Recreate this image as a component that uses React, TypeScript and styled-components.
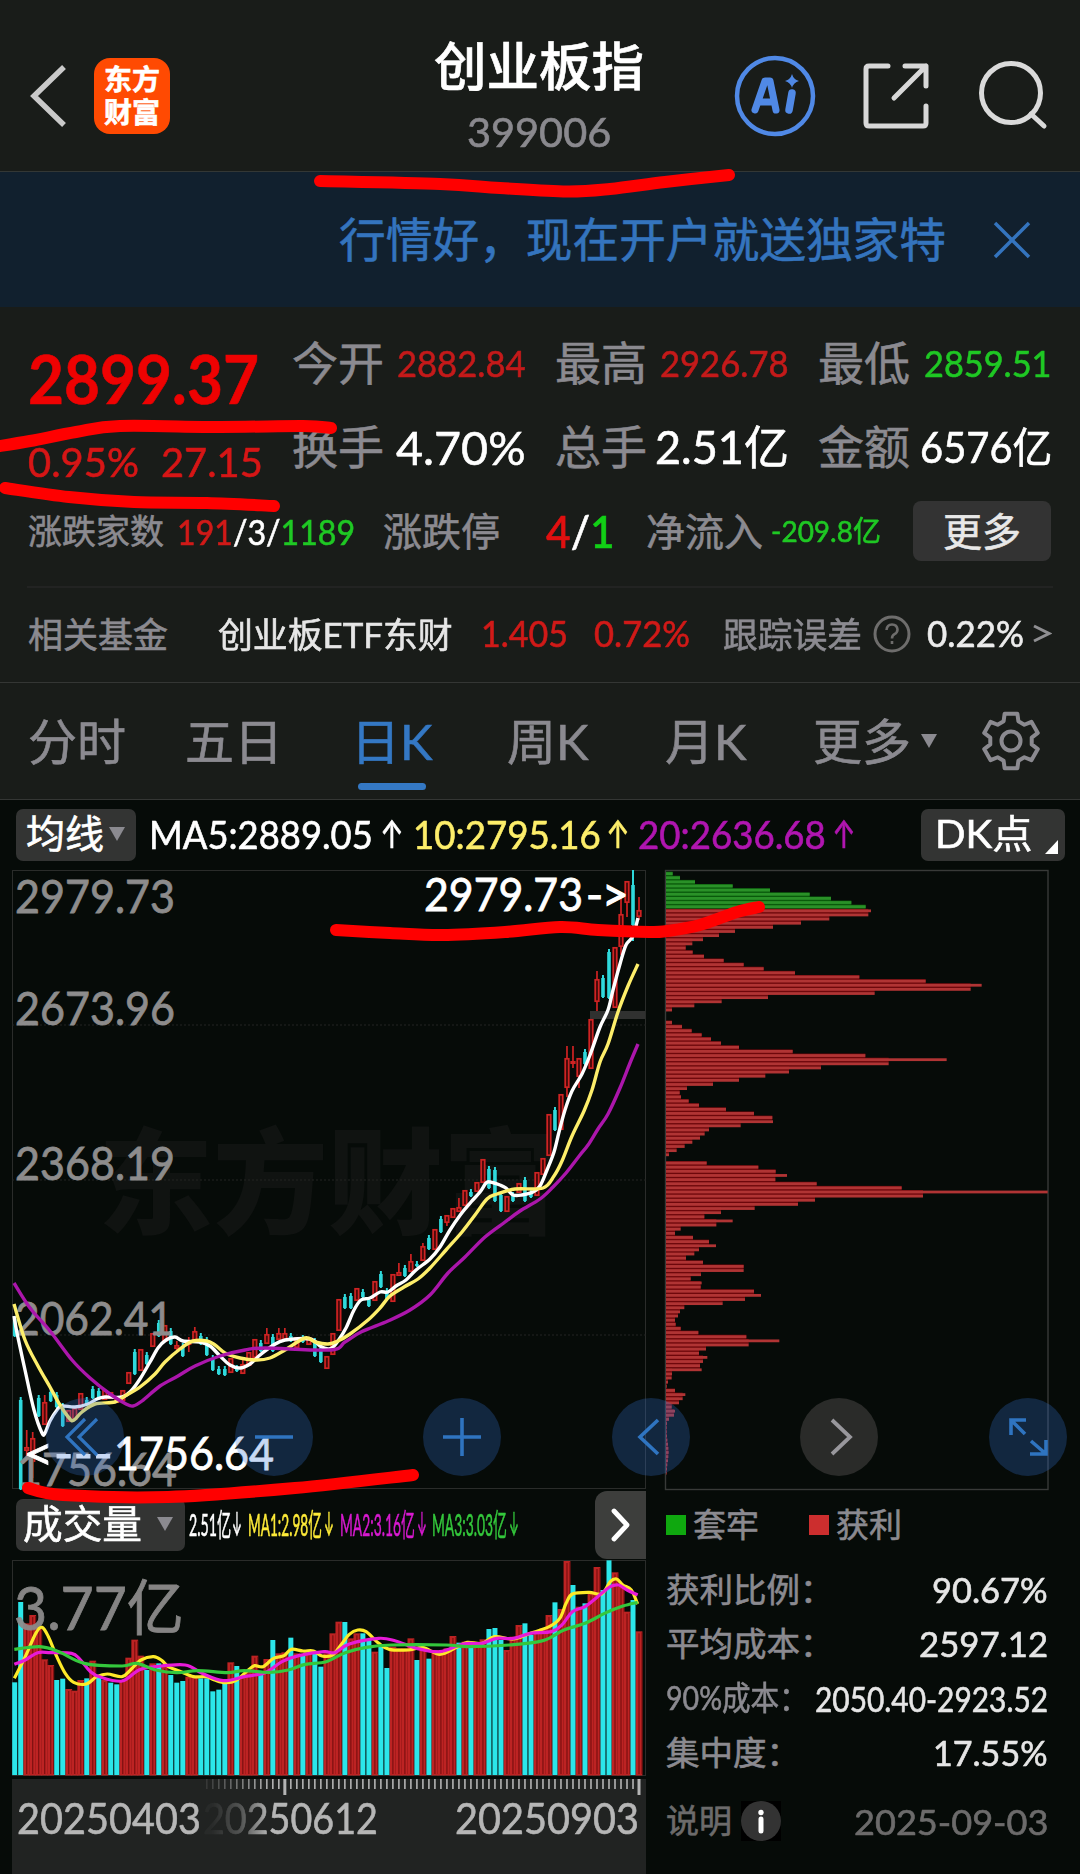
import React, { useLayoutEffect, useRef, useState } from "react";
import styled, { createGlobalStyle } from "styled-components";

const RED = "#d01a18";
const GREEN = "#1fc824";
const GREY = "#8b8a90";
const CANVAS = "#060b08";
const PANEL = "#191c19";
const FONT = `Lato, "Noto Sans CJK SC", sans-serif`;

const Global = createGlobalStyle`
  body { margin: 0; background: ${PANEL}; }
  * { box-sizing: border-box; }
`;

const Page = styled.div`
  position: relative;
  width: 1080px;
  height: 1874px;
  overflow: hidden;
  background: ${PANEL};
  color: #fff;
  font-family: ${FONT};
  line-height: 1.2;
  -webkit-text-stroke: 0.6px currentColor;
`;

/* ---------- text that squeezes itself into a given width ---------- */

const FitBox = styled.span<{ $w: number; $size: number; $color: string; $weight: number; $ml: number; $font?: string }>`
  display: inline-block;
  flex: none;
  width: ${(p) => p.$w}px;
  margin-left: ${(p) => p.$ml}px;
  font-size: ${(p) => p.$size}px;
  font-weight: ${(p) => p.$weight};
  font-family: ${(p) => p.$font ?? FONT};
  color: ${(p) => p.$color};
  white-space: nowrap;
`;

const FitInner = styled.span`
  display: inline-block;
  transform-origin: left center;
  -webkit-text-stroke: 0.6px currentColor;
`;

type FitProps = {
  w: number;
  size: number;
  color?: string;
  weight?: number;
  ml?: number;
  font?: string;
  children: React.ReactNode;
};

function Fit({ w, size, color = "#fff", weight = 400, ml = 0, font, children }: FitProps) {
  const ref = useRef<HTMLSpanElement>(null);
  const [scale, setScale] = useState(1);
  useLayoutEffect(() => {
    if (ref.current) setScale(w / ref.current.offsetWidth);
  }, [w]);
  return (
    <FitBox $w={w} $size={size} $color={color} $weight={weight} $ml={ml} $font={font}>
      <FitInner ref={ref} style={{ transform: `scaleX(${scale})` }}>
        {children}
      </FitInner>
    </FitBox>
  );
}

const Label = styled.span<{ $size: number; $color?: string; $ml?: number; $weight?: number; $w?: number }>`
  flex: none;
  font-size: ${(p) => p.$size}px;
  color: ${(p) => p.$color ?? GREY};
  font-weight: ${(p) => p.$weight ?? 400};
  margin-left: ${(p) => p.$ml ?? 0}px;
  width: ${(p) => (p.$w ? `${p.$w}px` : "auto")};
  white-space: nowrap;
  -webkit-text-stroke: 0.6px currentColor;
`;

const Tint = styled.span<{ $c: string }>`
  color: ${(p) => p.$c};
  -webkit-text-stroke: 0.6px currentColor;
`;

/* ---------- header ---------- */

const Header = styled.header`
  display: grid;
  grid-template-columns: 94px 76px 563px 79px 156px 1fr;
  align-items: center;
  height: 172px;
  padding-top: 20px;
  border-bottom: 1px solid #333735;
`;

const Logo = styled.div`
  display: flex;
  flex-direction: column;
  align-items: center;
  justify-content: center;
  height: 76px;
  border-radius: 16px;
  background: #ff4a02;
  font-size: 28px;
  font-weight: 700;
  line-height: 33px;
`;

const TitleBox = styled.div`
  display: flex;
  flex-direction: column;
  align-items: center;
  width: 220px;
  margin: 5px 0 0 259px;
`;

const Title = styled.div`
  font-size: 52.5px;
  font-weight: 500;
  line-height: 68px;
`;

const Code = styled.div`
  display: flex;
  line-height: 64px;
`;

const Banner = styled.div`
  display: flex;
  align-items: center;
  height: 135px;
  padding: 0 48px 0 339px;
  background: #11202e;
  color: #3474be;
  font-size: 46.7px;
  justify-content: space-between;
  -webkit-text-stroke: 0.6px #3474be;
`;

/* ---------- quote ---------- */

const Quote = styled.section`
  height: 376px;
  border-bottom: 1px solid #343634;
`;

const QuoteTop = styled.div`
  display: grid;
  grid-template-columns: 264px 1fr;
  height: 182px;
  padding-left: 28px;
`;

const PriceCol = styled.div`
  display: flex;
  flex-direction: column;
  padding-top: 28px;
`;

const PriceLine = styled.div<{ $h: number }>`
  display: flex;
  align-items: center;
  height: ${(p) => p.$h}px;
`;

const StatGrid = styled.div`
  display: grid;
  grid-template-columns: repeat(3, 234px);
  grid-template-rows: 84px 84px;
  column-gap: 29px;
  padding-top: 14px;
`;

const Stat = styled.div`
  display: flex;
  align-items: center;
  justify-content: space-between;
`;

const Row = styled.div<{ $h: number; $pl?: number }>`
  display: flex;
  align-items: center;
  height: ${(p) => p.$h}px;
  padding-left: ${(p) => p.$pl ?? 28}px;
`;

const MoreButton = styled.button`
  display: flex;
  align-items: center;
  justify-content: center;
  width: 138px;
  height: 60px;
  margin-left: 32px;
  padding: 0 0 5px;
  border: 0;
  border-radius: 8px;
  background: #333333;
  color: #e8e8e8;
  font: 400 39px ${FONT};
  -webkit-text-stroke: 0.6px #e8e8e8;
`;

const Divider = styled.div`
  height: 2px;
  margin: 13px 27px 0;
  background: #222322;
`;

/* ---------- tabs ---------- */

const Tabs = styled.nav`
  display: grid;
  grid-template-columns: 157px 166px 156px 158px 148px 108px 60px 1fr;
  align-items: center;
  height: 117px;
  padding-left: 28px;
  border-bottom: 1px solid #343634;
`;

const Tab = styled.div<{ $on?: boolean }>`
  position: relative;
  font-size: 49px;
  color: ${(p) => (p.$on ? "#3478c4" : GREY)};
  white-space: nowrap;
  -webkit-text-stroke: 0.6px currentColor;
  &::after {
    content: "";
    display: ${(p) => (p.$on ? "block" : "none")};
    position: absolute;
    left: 7px;
    bottom: -20px;
    width: 68px;
    height: 7px;
    border-radius: 4px;
    background: #3478c4;
  }
`;

const Caret = styled.i<{ $ml?: number; $h?: number }>`
  flex: none;
  width: 0;
  height: 0;
  margin-left: ${(p) => p.$ml ?? 0}px;
  border-left: 8px solid transparent;
  border-right: 8px solid transparent;
  border-top: ${(p) => p.$h ?? 14}px solid #8b8a90;
`;

/* ---------- charts ---------- */

const Board = styled.main`
  height: 1074px;
  background: ${CANVAS};
`;

const Chip = styled.div<{ $w: number; $h?: number; $pl?: number }>`
  position: relative;
  display: flex;
  flex: none;
  align-items: center;
  width: ${(p) => p.$w}px;
  height: ${(p) => p.$h ?? 52}px;
  padding-left: ${(p) => p.$pl ?? 10}px;
  padding-bottom: 3px;
  border-radius: 7px;
  background: #333433;
`;

const Corner = styled.i`
  position: absolute;
  right: 7px;
  bottom: 7px;
  border-left: 13px solid transparent;
  border-bottom: 14px solid #fff;
`;

const Charts = styled.div`
  position: relative;
  display: grid;
  grid-template-columns: 635px 384px;
  column-gap: 18px;
  height: 620px;
  padding-left: 12px;
`;

const Plot = styled.svg`
  display: block;
  overflow: visible;
  font-family: ${FONT};
  -webkit-text-stroke: 0;
`;

const Controls = styled.div`
  position: absolute;
  left: 46px;
  top: 528px;
  display: flex;
  gap: 110.6px;
`;

const Round = styled.button<{ $grey?: boolean }>`
  width: 78px;
  height: 78px;
  padding: 0;
  border: 0;
  border-radius: 50%;
  background: ${(p) => (p.$grey ? "#2a2b29" : "rgba(52, 116, 216, 0.27)")};
  svg { display: block; }
`;

const Lower = styled.div`
  display: grid;
  grid-template-columns: 634px 1fr;
  padding-left: 12px;
  height: 384px;
`;

const VolumeBar = styled.div`
  display: flex;
  align-items: center;
  height: 70px;
  padding-left: 4px;
`;

const Next = styled.button`
  display: flex;
  align-items: center;
  justify-content: center;
  width: 51px;
  height: 68px;
  margin-left: auto;
  padding: 0;
  border: 0;
  border-radius: 12px 0 0 12px;
  background: #3d3e3c;
`;

const Axis = styled.div`
  position: relative;
  display: flex;
  height: 95px;
  margin-top: 3px;
  padding: 14px 7px 0 5px;
  background: #212322;
`;

const Ticks = styled.svg`
  position: absolute;
  left: 0;
  top: 0;
`;

const Faded = styled.div`
  margin-left: 2px;
  mask-image: linear-gradient(90deg, rgba(0, 0, 0, 0.05) 5%, rgba(0, 0, 0, 0.35) 22%, #000 38%);
`;

const Side = styled.aside`
  padding: 8px 32px 0 20px;
`;

const SideRow = styled.div<{ $h: number }>`
  display: flex;
  align-items: center;
  height: ${(p) => p.$h}px;
`;

const Spacer = styled.span`
  flex: 1;
`;

const Swatch = styled.i<{ $c: string; $ml?: number }>`
  width: 20px;
  height: 20px;
  margin-left: ${(p) => p.$ml ?? 0}px;
  background: ${(p) => p.$c};
`;

const Marker = styled.svg`
  position: absolute;
  left: 0;
  top: 0;
  pointer-events: none;
`;

/* ---------- data ---------- */

const STEP = 6.003;
const X0 = 14.7;
const xAt = (i: number) => X0 + i * STEP;

/* kind, high, body top, body bottom, low */
type Candle = [string, number, number, number, number];
const candles: Candle[] = (
  "c1316-1337 c1397-1490 r1430-1447-1451-1458 r1432-1438-1462-1478 c1395-1417 r1395-1402-1425-1425 c1389-1402 c1392-1408 c1403-1427 r1410-1422 " +
  "r1408-1420 r1393-1410 c1397-1406 c1386-1399 c1388-1400 r1390-1400 r1392-1399 r1396-1403 r1390-1401 r1372-1384 " +
  "c1349-1375 r1349-1371 c1352-1365 r1333-1347 c1320-1337 r1325-1342 c1328-1345 r1341-1345-1349-1350 c1343-1357 r1337-1341-1345-1352 " +
  "r1327-1331-1341-1341 c1333-1345 c1337-1356 c1355-1371 c1366-1375 c1366-1376 r1358-1373 c1365-1372 r1360-1364-1374-1374 r1352-1366 " +
  "r1339-1358 c1340-1352 r1328-1334-1344-1344 c1334-1352 r1328-1333-1340-1340 r1328-1333-1340-1340 c1333-1342 r1337-1348 c1335-1343 r1337-1345 " +
  "c1338-1357 c1345-1363 r1356-1369 r1333-1355 r1299-1331 c1294-1309 c1293-1309 r1288-1301 c1289-1298 c1297-1307 " +
  "r1281-1301 c1271-1288 c1288-1300 r1274-1302 r1263-1272-1276-1276 c1265-1277 r1254-1261-1272-1272 c1261-1267 r1243-1246-1261-1261 c1235-1250 " +
  "r1229-1250 c1216-1233 r1215-1215-1223-1226 r1208-1218 r1198-1207-1212-1212 r1190-1206 c1189-1197 r1182-1192 r1159-1183 c1166-1189 " +
  "c1167-1202 c1192-1212 r1196-1212 c1192-1202 r1183-1193 c1177-1202 c1190-1198 r1172-1196 r1158-1175 r1114-1156 " +
  "c1107-1131 r1094-1130 r1046-1058-1088-1097 r1046-1061-1064-1068 r1058-1058-1077-1088 c1049-1065 r1019-1069 r971-979-1002-1011 c975-998 c949-999 " +
  "r947-1008 r897-914-947-955 r881-881-903-917 c870-885-925-941 r897-910-917-920"
)
  .split(" ")
  .map((s) => {
    const n = s.slice(1).split("-").map(Number);
    return n.length === 2 ? [s[0], n[0], n[0], n[1], n[1]] : [s[0], n[0], n[1], n[2], n[3]];
  }) as Candle[];

const ma5 =
  "14,1316 17,1333 25,1370 34,1410 42,1433 45,1433 50,1421 57,1410 62,1406 75,1407 88,1404 97,1399 105,1397 122,1397 131,1391 140,1379 150,1362 158,1348 166,1340 175,1337 183,1341 200,1342 210,1346 220,1356 230,1365 240,1368 250,1364 260,1355 272,1346 285,1340 310,1339 320,1346 328,1349 333,1347 338,1341 346,1328 354,1310 361,1300 370,1298 380,1292 388,1292 396,1286 406,1280 416,1270 430,1259 440,1247 450,1230 461,1214 471,1202 480,1192 486,1183 490,1182 500,1185 506,1188 513,1195 522,1195 533,1192 540,1186 547,1170 554,1152 559,1132 565,1110 572,1091 582,1074 590,1055 600,1027 608,1010 613,990 620,964 626,945 633,936 638,918";
const ma10 =
  "14,1304 25,1340 38,1366 50,1387 60,1405 70,1419 74,1420 82,1412 95,1404 115,1402 125,1396 140,1387 155,1374 165,1362 180,1349 193,1341 207,1341 215,1345 225,1353 240,1358 257,1360 270,1358 285,1350 305,1338 315,1342 328,1344 338,1341 350,1334 368,1320 380,1308 390,1296 404,1287 418,1279 430,1268 446,1250 462,1232 475,1215 487,1199 497,1194 515,1189 543,1188 554,1176 562,1161 572,1136 584,1111 592,1090 600,1062 608,1044 618,1012 628,986 638,964";
const ma20 =
  "14,1283 30,1308 50,1331 72,1360 90,1378 110,1394 126,1404 133,1406 142,1401 160,1386 178,1376 195,1366 220,1356 245,1350 265,1348 330,1350 345,1342 361,1332 388,1321 410,1310 430,1295 448,1273 465,1257 485,1237 505,1222 520,1211 540,1199 553,1187 566,1173 580,1155 588,1145 598,1129 608,1114 620,1088 630,1063 638,1044";

/* width of each price level, in thirds of a pixel; 0 leaves the level empty */
const chips = [
  20, 42, 87, 200, 312, 431, 495, 556, 599, 615, 607, 490, 405, 321, 207, 159, 111, 79, 59, 80, 114, 173, 233, 293, 387, 580, 779,
  947, 914, 626, 306, 167, 85, 18, 0, 0, 18, 48, 77, 107, 135, 165, 219, 380, 598, 842, 668, 465, 369, 298, 219, 141, 63, 41, 45, 68,
  99, 180, 264, 319, 321, 224, 129, 116, 102, 79, 56, 32, 9, 0, 122, 277, 329, 363, 328, 452, 707, 1145, 771, 447, 396, 266, 165,
  115, 200, 151, 44, 27, 81, 129, 150, 99, 85, 60, 111, 233, 233, 105, 74, 107, 104, 264, 285, 237, 170, 55, 42, 36, 27, 29, 44, 97,
  241, 340, 248, 120, 99, 124, 111, 102, 107, 18, 17, 6, 2, 27, 58, 50, 39, 17, 27, 24, 9, 3, 2, 2, 3, 4, 6, 7, 8, 7, 6, 4, 3, 2,
];

/* distance of each volume bar's top below the top of the block, in thirds of a pixel */
const volumes = (
  "c577 c336 r400 r375 r410 r508 r525 c570 c566 r597 r602 r570 c565 r512 c560 r570 c578 c583 r570 r503 r449 r497 c540 r520 c520 r530 c555 c578 c573 r560 r560 c565 c565 c604 c599 c580 r517 c528 r560 r545 r497 c550 r507 c450 r490 r487 c443 r490 c495 r490 c485 c530 r490 r430 r395 c396 r445 r430 c430 c450 r485 c470 c534 r470 r475 r475 r445 c510 r475 c506 r480 r490 r475 r438 c458 r455 c460 r465 r448 c417 c414 c450 r480 r440 r405 c400 c435 r425 r415 r375 c337 r357 r213 c285 r350 c340 r310 r231 c300 c211 r247 r290 r365 c330 r424"
)
  .split(" ")
  .map((s) => ({ up: s[0] === "r", y: 1490 + Number(s.slice(1)) / 3 }));

type Pt = [number, number];
const vma1: Pt[] = [[34, 565], [60, 500], [85, 430], [100, 412], [115, 440], [135, 500], [155, 550], [175, 577], [205, 582], [230, 560], [255, 552], [290, 560], [310, 540], [335, 510], [365, 500], [385, 512], [400, 530], [430, 545], [460, 560], [490, 560], [510, 570], [535, 578], [560, 572], [590, 540], [605, 527], [625, 530], [650, 505], [675, 497], [692, 478], [720, 483], [745, 483], [765, 498], [790, 495], [810, 465], [830, 433], [850, 420], [870, 425], [900, 460], [925, 478], [970, 480], [1005, 473], [1045, 493], [1085, 472], [1110, 457], [1145, 460], [1175, 440], [1220, 447], [1260, 430], [1305, 410], [1330, 385], [1345, 340], [1360, 312], [1400, 307], [1430, 312], [1450, 275], [1465, 267], [1480, 285], [1500, 300], [1515, 342]];
const vma2: Pt[] = [[34, 523], [60, 510], [90, 488], [120, 488], [170, 490], [190, 508], [215, 545], [240, 562], [290, 573], [330, 540], [370, 530], [440, 525], [480, 550], [530, 572], [580, 560], [630, 548], [670, 515], [710, 497], [770, 485], [795, 488], [830, 462], [900, 445], [940, 453], [990, 475], [1045, 485], [1100, 462], [1145, 460], [1180, 445], [1220, 445], [1260, 430], [1310, 425], [1335, 405], [1360, 365], [1390, 350], [1420, 320], [1450, 290], [1470, 285], [1490, 300], [1515, 315]];
const vma3: Pt[] = [[34, 478], [95, 470], [140, 485], [200, 520], [290, 528], [325, 520], [370, 540], [420, 548], [470, 542], [540, 548], [580, 542], [640, 547], [685, 540], [725, 523], [775, 515], [820, 488], [870, 472], [930, 465], [1060, 465], [1110, 470], [1210, 465], [1290, 452], [1340, 420], [1390, 400], [1440, 368], [1480, 348], [1515, 337]];

/* Catmull-Rom smoothing of a point list */
function smooth(p: Pt[]) {
  let d = `M${p[0][0]} ${p[0][1]}`;
  for (let i = 0; i < p.length - 1; i++) {
    const a = p[i - 1] ?? p[i];
    const b = p[i];
    const c = p[i + 1];
    const e = p[i + 2] ?? c;
    d += `C${b[0] + (c[0] - a[0]) / 6} ${b[1] + (c[1] - a[1]) / 6} ${c[0] - (e[0] - b[0]) / 6} ${c[1] - (e[1] - b[1]) / 6} ${c[0]} ${c[1]}`;
  }
  return d;
}
const parse = (s: string) => s.split(" ").map((q) => q.split(",").map(Number) as Pt);
const volumePts = (p: Pt[]) => p.map(([x, y]) => [x / 2.376, 1490 + y / 3] as Pt);

/* ---------- chart pieces ---------- */

function AxisText({ x, y, w, size, fill = "#8d8c8c", children }: { x: number; y: number; w: number; size: number; fill?: string; children: React.ReactNode }) {
  return (
    <text x={x} y={y} textLength={w} lengthAdjust="spacingAndGlyphs" fontSize={size} fill={fill} stroke={fill} strokeWidth="0.8">
      {children}
    </text>
  );
}

function PriceChart() {
  return (
    <Plot width="635" height="620" viewBox="12 870 635 620">
      <text x="98" y="1225" fontSize="115" fontWeight="900" fill="#101311">东方财富</text>
      <rect x="12.5" y="870.5" width="633" height="618" fill="none" stroke="#2a2c2a" />
      {[1025, 1180, 1335].map((y) => (
        <line key={y} x1="12" x2="646" y1={y} y2={y} stroke="#232523" strokeDasharray="2 2" />
      ))}
      <rect x="590" y="1011" width="55" height="8" fill="#303130" />
      {candles.map(([k, hi, top, bot, lo], i) => {
        const x = xAt(i);
        return k === "c" ? (
          <g key={i} fill="#2fd9dc">
            <rect x={x - 1} y={hi} width="2" height={lo - hi} />
            <rect x={x - 1.8} y={top + (hi === top ? 3 : 0)} width="3.6" height={Math.max(2, bot - top - (hi === top ? 4 : 0))} />
          </g>
        ) : (
          <g key={i} stroke="#cf2323" strokeWidth="1.7">
            <path d={`M${x} ${hi}V${top}M${x} ${bot}V${lo}`} />
            <rect x={x - 1.8} y={top + 0.8} width="3.6" height={Math.max(1, bot - top - 1.6)} fill="#4a0a0a" />
          </g>
        );
      })}
      <AxisText x={15} y={913} w={160} size={46}>2979.73</AxisText>
      <AxisText x={15} y={1025} w={160} size={46}>2673.96</AxisText>
      <AxisText x={15} y={1180} w={160} size={46}>2368.19</AxisText>
      <AxisText x={15} y={1335} w={158} size={46}>2062.41</AxisText>
      <AxisText x={17} y={1486} w={160} size={46}>1756.64</AxisText>
      <g fill="none" strokeWidth="3.4" strokeLinejoin="round">
        <path d={smooth(parse(ma5))} stroke="#fff" />
        <path d={smooth(parse(ma10))} stroke="#fdee6a" />
        <path d={smooth(parse(ma20))} stroke="#ab16ab" />
      </g>
      <AxisText x={424} y={911} w={159} size={46} fill="#fff">2979.73</AxisText>
      <text x="586" y="911" fontSize="46" fill="#fff" stroke="#fff" strokeWidth="1.2">
        -<tspan dx="-1">&gt;</tspan>
      </text>
      <AxisText x={23} y={1470} w={90} size={46} fill="#fff">&lt;---</AxisText>
      <AxisText x={114} y={1470} w={160} size={46} fill="#fff">1756.64</AxisText>
    </Plot>
  );
}

function ChipChart() {
  return (
    <Plot width="384" height="620" viewBox="665 870 384 620">
      <rect x="665.5" y="870.5" width="382.5" height="619" fill="none" stroke="#383a38" strokeWidth="1.4" />
      {chips.map((w, i) => {
        if (!w) return null;
        const y = 873.6 + i * 4.135;
        const up = i > 8;
        return (
          <g key={i}>
            <rect x="666" y={y - 2} width={Math.min(w, chips[i + 1] ?? 0) / 3} height="5" fill={up ? "#6e080c" : "#0a5a0c"} />
            <rect x="666" y={y - 1.4} width={w / 3} height="2.8" fill={up ? "#b03434" : "#2a9128"} />
          </g>
        );
      })}
    </Plot>
  );
}

function VolumeChart() {
  return (
    <Plot width="635" height="216" viewBox="12 1560 635 216">
      <rect x="12.5" y="1560.5" width="633" height="215" fill="none" stroke="#2a2c2a" />
      {volumes.map(({ up, y }, i) => {
        const x = xAt(i);
        return up ? (
          <g key={i}>
            <rect x={x - 3.4} y={y} width="6.8" height={1775.5 - y} fill="#bd2323" />
            <rect x={x - 0.6} y={y + 2} width="1.2" height={1772 - y} fill="#7c1010" />
            <rect x={x + 2.6} y={y + 1} width="0.8" height={1773 - y} fill="#5f0a0a" />
          </g>
        ) : null;
      })}
      {volumes.map(({ up, y }, i) => (up ? null : <rect key={i} x={xAt(i) - 2.5} y={y} width="5" height={1775 - y} fill="#2be6ea" />))}
      <g opacity="0.94">
        <AxisText x={14} y={1630} w={170} size={60}>3.77亿</AxisText>
      </g>
      <g fill="none" strokeWidth="3.2" strokeLinejoin="round">
        <path d={smooth(volumePts(vma1))} stroke="#fdea28" />
        <path d={smooth(volumePts(vma2))} stroke="#e81ad8" />
        <path d={smooth(volumePts(vma3))} stroke="#34c83c" />
      </g>
    </Plot>
  );
}

function AxisTicks() {
  return (
    <Ticks width="635" height="20">
      {Array.from({ length: 73 }, (_, k) => {
        const i = 32 + k;
        const long = i === 45 || i === 104;
        return (
          <rect
            key={i}
            x={xAt(i) - 12 - (long ? 1.5 : 0.8)}
            y="0"
            width={long ? 3 : 1.6}
            height={long ? 16 : 10}
            fill="#b4b4b4"
            opacity={Math.min(1, 0.15 + k * 0.08)}
          />
        );
      })}
    </Ticks>
  );
}

const icon = { fill: "none", strokeLinejoin: "miter" as const };

const Arrow = ({ color, down, w = 21, size = 38, ml = 0 }: { color: string; down?: boolean; w?: number; size?: number; ml?: number }) => (
  <Fit w={w} size={size} color={color} ml={ml} font='Inter, "Noto Sans CJK SC", sans-serif'>
    {down ? "↓" : "↑"}
  </Fit>
);

const gear = (() => {
  const pts: string[] = [];
  for (let k = 0; k < 6; k++) {
    const base = (k * 60 - 90) * (Math.PI / 180);
    [[-0.36, 21], [-0.23, 28], [0.23, 28], [0.36, 21]].forEach(([a, r]) => {
      pts.push(`${30 + r * Math.cos(base + a)},${30 + r * Math.sin(base + a)}`);
    });
  }
  return pts.join(" ");
})();

export default function App() {
  return (
    <>
      <Global />
      <Page>
        <Header>
          <svg width="94" height="76" viewBox="0 58 94 76" {...icon}>
            <path d="M64 67L34 96L64 125" stroke="#c9c9c9" strokeWidth="5.5" />
          </svg>
          <Logo>
            <span>东方</span>
            <span>财富</span>
          </Logo>
          <TitleBox>
            <Title>创业板指</Title>
            <Code>
              <Fit w={144} size={40} color="#8a898e">399006</Fit>
            </Code>
          </TitleBox>
          <svg width="84" height="84" viewBox="733 54 84 84" {...icon}>
            <circle cx="775" cy="96" r="38" stroke="#5089e6" strokeWidth="4.5" />
            <path d="M755 110L765 81H770L776 110M760 102H773" stroke="#5089e6" strokeWidth="7" strokeLinejoin="round" strokeLinecap="round" />
            <path d="M792 93L789 110" stroke="#5089e6" strokeWidth="7.5" strokeLinecap="round" />
            <path d="M792 74Q793.500 79.500 799 81Q793.500 82.500 792 88Q790.500 82.500 785 81Q790.500 79.500 792 74Z" fill="#5089e6" />
          </svg>
          <svg width="156" height="80" viewBox="812 56 156 80" {...icon}>
            <g stroke="#d8d8d8" strokeWidth="5" strokeLinecap="round" strokeLinejoin="round">
              <path d="M888 66H869Q866 66 866 69V123Q866 126 869 126H923Q926 126 926 123V106" />
              <path d="M905 66H926V86M926 66L894 98" />
            </g>
          </svg>
          <svg width="82" height="80" viewBox="968 56 82 80" {...icon}>
            <circle cx="1011" cy="93" r="29.500" stroke="#dadada" strokeWidth="5" />
            <path d="M1031 114L1044 126" stroke="#dadada" strokeWidth="5" strokeLinecap="round" />
          </svg>
        </Header>

        <Banner>
          <span>行情好，现在开户就送独家特</span>
          <svg width="40" height="40" viewBox="0 0 40 40" {...icon}>
            <path d="M3 3L37 37M37 3L3 37" stroke="#3474be" strokeWidth="3.500" />
          </svg>
        </Banner>

        <Quote>
          <QuoteTop>
            <PriceCol>
              <PriceLine $h={84}>
                <Fit w={231} size={67.5} weight={700} color="#ee0202">2899.37</Fit>
              </PriceLine>
              <PriceLine $h={86}>
                <Fit w={111} size={41} color="#d61616">0.95%</Fit>
                <Fit w={102} size={41} color="#d61616" ml={22}>27.15</Fit>
              </PriceLine>
            </PriceCol>
            <StatGrid>
              <Stat><Label $size={46}>今开</Label><Fit w={129} size={37} color="#c41a1a">2882.84</Fit></Stat>
              <Stat><Label $size={46}>最高</Label><Fit w={129} size={37} color="#c41a1a">2926.78</Fit></Stat>
              <Stat><Label $size={46}>最低</Label><Fit w={128} size={37} color={GREEN}>2859.51</Fit></Stat>
              <Stat><Label $size={46}>换手</Label><Fit w={130} size={47}>4.70%</Fit></Stat>
              <Stat><Label $size={46}>总手</Label><Fit w={134} size={46}>2.51亿</Fit></Stat>
              <Stat><Label $size={46}>金额</Label><Fit w={132} size={42}>6576亿</Fit></Stat>
            </StatGrid>
          </QuoteTop>
          <Row $h={84}>
            <Label $size={34} $w={149}>涨跌家数</Label>
            <Fit w={178} size={35} color="#fff">
              <Tint $c={RED}>191</Tint>/3/<Tint $c={GREEN}>1189</Tint>
            </Fit>
            <Label $size={39} $ml={28}>涨跌停</Label>
            <Fit w={69} size={45} ml={46} weight={500}>
              <Tint $c="#e01010">4</Tint>/<Tint $c="#12d016">1</Tint>
            </Fit>
            <Label $size={39} $ml={31}>净流入</Label>
            <Fit w={110} size={29} ml={8} color={GREEN}>-209.8亿</Fit>
            <MoreButton>更多</MoreButton>
          </Row>
          <Divider />
          <Row $h={92}>
            <Label $size={35} $w={190}>相关基金</Label>
            <Fit w={235} size={35} color="#e6e6e6">创业板ETF东财</Fit>
            <Fit w={87} size={36} color={RED} ml={28}>1.405</Fit>
            <Fit w={96} size={36} color={RED} ml={26}>0.72%</Fit>
            <Fit w={139} size={35} color={GREY} ml={33}>跟踪误差</Fit>
            <svg width="38" height="38" viewBox="0 0 38 38" style={{ marginLeft: 11 }} {...icon}>
              <circle cx="19" cy="19" r="17" stroke="#6e6d6c" strokeWidth="3" />
              <path d="M13.500 15Q14 9.500 19 9.500T24.500 14.500Q24.500 17.500 21.500 19.200Q19 20.600 19 23.500M19 26V29" stroke="#6e6d6c" strokeWidth="2.600" />
            </svg>
            <Fit w={97} size={36} color="#ececec" ml={16}>0.22%</Fit>
            <svg width="20" height="24" viewBox="0 0 20 24" style={{ marginLeft: 8 }} {...icon}>
              <path d="M2 4L17 11.500L2 19" stroke="#8f8f92" strokeWidth="3" />
            </svg>
          </Row>
        </Quote>

        <Tabs>
          <Tab>分时</Tab>
          <Tab>五日</Tab>
          <Tab $on>日K</Tab>
          <Tab>周K</Tab>
          <Tab>月K</Tab>
          <Tab>更多</Tab>
          <Caret $h={14} />
          <svg width="60" height="60" viewBox="0 0 60 60" {...icon}>
            <polygon points={gear} stroke={GREY} strokeWidth="4" strokeLinejoin="round" />
            <circle cx="30" cy="30" r="9.500" stroke={GREY} strokeWidth="4" />
          </svg>
        </Tabs>

        <Board>
          <Row $h={70} $pl={16}>
            <Chip $w={120}>
              <Label $size={39} $color="#fff">均线</Label>
              <Caret $ml={5} />
            </Chip>
            <Fit w={224} size={38} ml={13}>MA5:2889.05</Fit>
            <Arrow color="#fff" ml={7} w={24} />
            <Fit w={188} size={38} ml={9} color="#fdee6a">10:2795.16</Fit>
            <Arrow color="#fdee6a" ml={5} w={24} />
            <Fit w={188} size={38} ml={8} color="#b016b0">20:2636.68</Fit>
            <Arrow color="#b016b0" ml={6} w={24} />
            <Spacer />
            <Chip $w={144} $pl={14}>
              <Fit w={98} size={39}>DK点</Fit>
              <Corner />
            </Chip>
            <Label $size={16} $w={15} />
          </Row>

          <Charts>
            <PriceChart />
            <ChipChart />
            <Controls>
              <Round>
                <svg width="78" height="78" viewBox="0 0 78 78" stroke="#2f74c0" strokeWidth="3.200" {...icon}>
                  <path d="M39 21L21 39L39 57M51 21L33 39L51 57" />
                </svg>
              </Round>
              <Round>
                <svg width="78" height="78" viewBox="0 0 78 78" stroke="#2f74c0" strokeWidth="3.600" {...icon}>
                  <path d="M20 39H58" />
                </svg>
              </Round>
              <Round>
                <svg width="78" height="78" viewBox="0 0 78 78" stroke="#2f74c0" strokeWidth="3.600" {...icon}>
                  <path d="M20 39H58M39 20V58" />
                </svg>
              </Round>
              <Round>
                <svg width="78" height="78" viewBox="0 0 78 78" stroke="#2f74c0" strokeWidth="3.600" {...icon}>
                  <path d="M46 22L28 39L46 56" />
                </svg>
              </Round>
              <Round $grey>
                <svg width="78" height="78" viewBox="0 0 78 78" stroke="#98979c" strokeWidth="3.800" {...icon}>
                  <path d="M32 22L50 39L32 56" />
                </svg>
              </Round>
              <Round>
                <svg width="78" height="78" viewBox="0 0 78 78" stroke="#2f74c0" strokeWidth="3.600" {...icon}>
                  <path d="M22 37V22H37M22 22L36 36M57 42V56H41M57 56L42 43" />
                </svg>
              </Round>
            </Controls>
          </Charts>

          <Lower>
            <div>
              <VolumeBar>
                <Chip $w={169} $pl={7}>
                  <Fit w={119} size={39}>成交量</Fit>
                  <Caret $ml={15} />
                </Chip>
                <Fit w={42} size={31} ml={4}>2.51亿</Fit>
                <Arrow color="#fff" w={10} size={32} ml={1} down />
                <Fit w={74} size={31} ml={6} color="#fdea38">MA1:2.98亿</Fit>
                <Arrow color="#fdea38" w={10} size={32} ml={2} down />
                <Fit w={75} size={31} ml={6} color="#d81ad0">MA2:3.16亿</Fit>
                <Arrow color="#d81ad0" w={10} size={32} ml={2} down />
                <Fit w={75} size={31} ml={5} color="#34c83c">MA3:3.03亿</Fit>
                <Arrow color="#34c83c" w={10} size={32} ml={2} down />
                <Next>
                  <svg width="24" height="40" viewBox="0 0 24 40" {...icon}>
                    <path d="M5 6L18 20L5 34" stroke="#fff" strokeWidth="4.800" strokeLinecap="round" strokeLinejoin="round" />
                  </svg>
                </Next>
              </VolumeBar>
              <VolumeChart />
              <Axis>
                <AxisTicks />
                <Fit w={184} size={42} color="#b6b6b6">20250403</Fit>
                <Faded>
                  <Fit w={175} size={42} color="#b6b6b6">20250612</Fit>
                </Faded>
                <Spacer />
                <Fit w={184} size={42} color="#b6b6b6">20250903</Fit>
              </Axis>
            </div>

            <Side>
              <SideRow $h={54}>
                <Swatch $c="#0fa80f" />
                <Label $size={33} $ml={7}>套牢</Label>
                <Swatch $c="#cc2e2e" $ml={50} />
                <Label $size={33} $ml={7}>获利</Label>
              </SideRow>
              <SideRow $h={10} />
              <SideRow $h={54}>
                <Label $size={33.5}>获利比例：</Label>
                <Spacer />
                <Fit w={116} size={35} color="#e6e6e6">90.67%</Fit>
              </SideRow>
              <SideRow $h={54}>
                <Label $size={33.5}>平均成本：</Label>
                <Spacer />
                <Fit w={129} size={35} color="#e6e6e6">2597.12</Fit>
              </SideRow>
              <SideRow $h={55}>
                <Fit w={142} size={33} color={GREY}>90%成本：</Fit>
                <Spacer />
                <Fit w={233} size={35} color="#e6e6e6">2050.40-2923.52</Fit>
              </SideRow>
              <SideRow $h={54}>
                <Label $size={33.5}>集中度：</Label>
                <Spacer />
                <Fit w={115} size={35} color="#e6e6e6">17.55%</Fit>
              </SideRow>
              <SideRow $h={83}>
                <Label $size={33} $color="#6c6b6b">说明</Label>
                <svg width="40" height="40" viewBox="0 0 40 40" style={{ marginLeft: 9, background: "#000" }}>
                  <circle cx="20" cy="20" r="20" fill="#333333" />
                  <circle cx="20" cy="11.500" r="2.700" fill="#fff" />
                  <path d="M20 18V30" stroke="#fff" strokeWidth="5" strokeLinecap="round" />
                </svg>
                <Spacer />
                <Fit w={194} size={35} color="#6c6b6b">2025-09-03</Fit>
              </SideRow>
            </Side>
          </Lower>
        </Board>

        <Marker width="1080" height="1874" viewBox="0 0 1080 1874" fill="none" stroke="#ff0000" strokeWidth="12" strokeLinecap="round">
          <path d={smooth([[320, 181], [440, 184], [500, 188], [567, 191.5], [610, 189], [665, 182], [729, 175]])} />
          <path d={smooth([[-6, 447], [30, 441], [76, 432], [120, 426], [220, 427], [303, 426], [331, 428]])} />
          <path d={smooth([[5, 488], [69, 497], [134, 502], [207, 503], [274, 506]])} />
          <path d={smooth([[336, 930], [390, 933], [442, 935], [505, 932], [560, 927], [598, 930], [650, 932], [667, 931], [700, 925], [737, 912], [759, 907]])} />
          <path d={smooth([[28, 1488], [63, 1495], [168, 1497], [295, 1488], [413, 1475]])} />
        </Marker>
      </Page>
    </>
  );
}
